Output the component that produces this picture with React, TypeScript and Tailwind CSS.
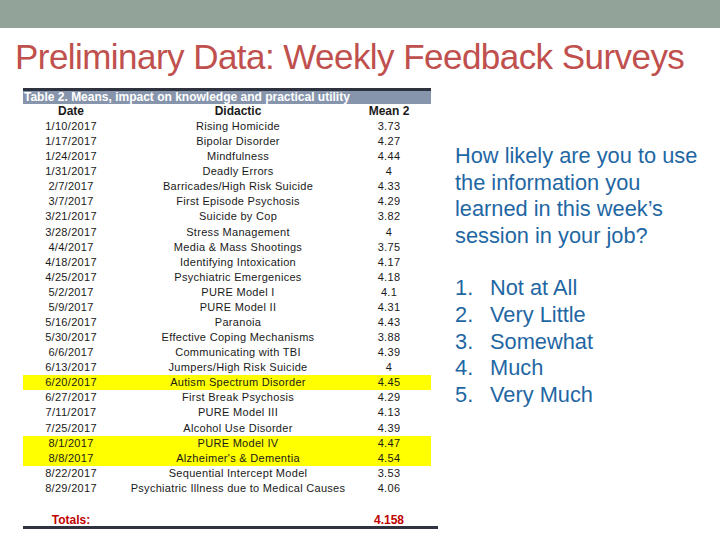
import React from "react";

const rows: [string, string, string, boolean?][] = [
  ["1/10/2017", "Rising Homicide", "3.73"],
  ["1/17/2017", "Bipolar Disorder", "4.27"],
  ["1/24/2017", "Mindfulness", "4.44"],
  ["1/31/2017", "Deadly Errors", "4"],
  ["2/7/2017", "Barricades/High Risk Suicide", "4.33"],
  ["3/7/2017", "First Episode Psychosis", "4.29"],
  ["3/21/2017", "Suicide by Cop", "3.82"],
  ["3/28/2017", "Stress Management", "4"],
  ["4/4/2017", "Media & Mass Shootings", "3.75"],
  ["4/18/2017", "Identifying Intoxication", "4.17"],
  ["4/25/2017", "Psychiatric Emergenices", "4.18"],
  ["5/2/2017", "PURE Model I", "4.1"],
  ["5/9/2017", "PURE Model II", "4.31"],
  ["5/16/2017", "Paranoia", "4.43"],
  ["5/30/2017", "Effective Coping Mechanisms", "3.88"],
  ["6/6/2017", "Communicating with TBI", "4.39"],
  ["6/13/2017", "Jumpers/High Risk Suicide", "4"],
  ["6/20/2017", "Autism Spectrum Disorder", "4.45", true],
  ["6/27/2017", "First Break Psychosis", "4.29"],
  ["7/11/2017", "PURE Model III", "4.13"],
  ["7/25/2017", "Alcohol Use Disorder", "4.39"],
  ["8/1/2017", "PURE Model IV", "4.47", true],
  ["8/8/2017", "Alzheimer's & Dementia", "4.54", true],
  ["8/22/2017", "Sequential Intercept Model", "3.53"],
  ["8/29/2017", "Psychiatric Illness due to Medical Causes", "4.06"],
];

const answers = ["Not at All", "Very Little", "Somewhat", "Much", "Very Much"];

export default function App() {
  return (
    <div className="w-[720px] h-[540px] bg-white overflow-hidden font-['Liberation_Sans',Arial,sans-serif]">
      {/* top band */}
      <div className="h-[28px] bg-[#92a39a]" />

      {/* title */}
      <h1 className="pl-[15px] pt-[7px] h-[60px] text-[35px] leading-[44px] text-[#c0504d] tracking-[-0.55px]">
        Preliminary Data: Weekly Feedback Surveys
      </h1>

      <div className="flex">
        {/* table */}
        <div className="ml-[23px] w-[408px] text-[11px] text-[#1a1a1a] tracking-[0.3px]">
          <div className="border-t-[3px] border-[#2f3340] bg-[#8795ac] h-[16px] pl-[1px] text-white font-bold text-[12px] leading-[13px] tracking-normal">
            Table 2. Means, impact on knowledge and practical utility
          </div>
          <div className="flex h-[15px] leading-[15px] font-bold text-[12px] tracking-normal">
            <div className="w-[96px] text-center">Date</div>
            <div className="w-[238px] text-center">Didactic</div>
            <div className="w-[64px] text-center">Mean 2</div>
          </div>
          {rows.map(([d, t, m, hl]) => (
            <div
              key={d}
              className={`flex h-[15.08px] leading-[15px] ${hl ? "bg-[#ffff00]" : ""}`}
            >
              <div className="w-[96px] text-center">{d}</div>
              <div className="w-[238px] text-center whitespace-nowrap">{t}</div>
              <div className="w-[64px] text-center">{m}</div>
            </div>
          ))}
          <div className="h-[16px]" />
          <div className="flex w-[415px] h-[17px] leading-[17px] font-bold text-[12px] text-[#c00000] border-b-[3px] border-[#2f3340] tracking-normal">
            <div className="w-[96px] text-center">Totals:</div>
            <div className="w-[238px]" />
            <div className="w-[64px] text-center">4.158</div>
          </div>
        </div>

        {/* question */}
        <div className="ml-[24px] pt-[55px] text-[21.8px] leading-[26.6px] text-[#1f67a3]">
          <p>
            How likely are you to use
            <br />
            the information you
            <br />
            learned in this week’s
            <br />
            session in your job?
          </p>
          <ol className="mt-[26px]">
            {answers.map((a, i) => (
              <li key={a} className="flex">
                <span className="w-[35px]">{i + 1}.</span>
                <span>{a}</span>
              </li>
            ))}
          </ol>
        </div>
      </div>
    </div>
  );
}
